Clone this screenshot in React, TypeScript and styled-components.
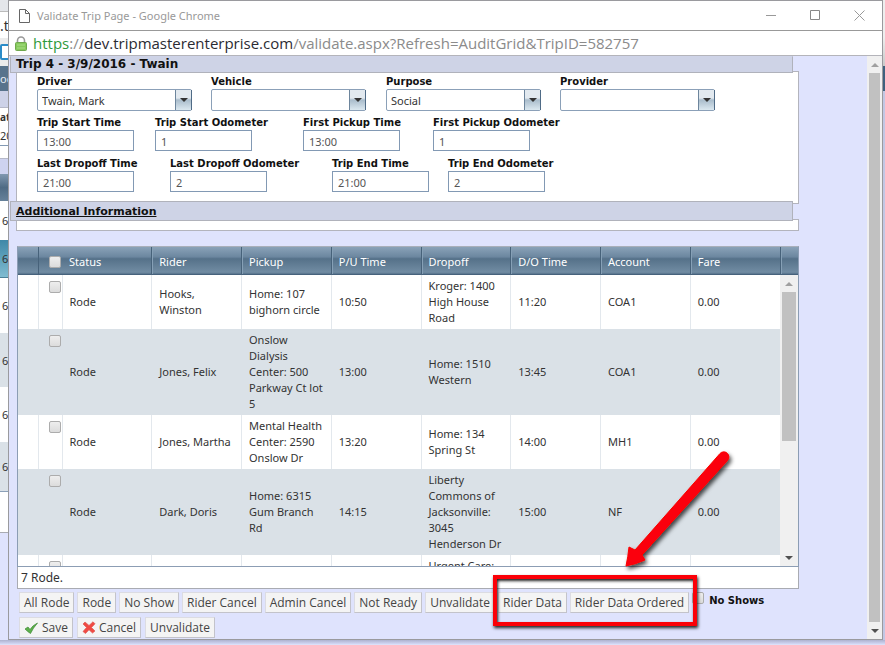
import React from "react";
import styled, { createGlobalStyle, css } from "styled-components";

const uiFont = `"Noto Sans", "Open Sans", sans-serif`;
const narrowFont = `"Open Sans", "Noto Sans", sans-serif`;
const boldFont = `"DejaVu Sans", sans-serif`;

const GlobalStyle = createGlobalStyle`
  *, *::before, *::after { box-sizing: border-box; }
  body { margin: 0; background: #dfe3fd; font-family: ${uiFont}; color: #333; overflow: hidden; }
  button, input, select { font-family: inherit; margin: 0; }
`;

/* ---------- desktop behind the popup ---------- */
const Desktop = styled.div`
  display: flex;
  padding-bottom: 6px;
  background: linear-gradient(to top, #f3f4fe 0, #d3d8f5 2px, #aeb2cf 6px, #dfe3fd 6px);
`;

const LeftStrip = styled.div`
  width: 8px;
  flex: none;
  overflow: hidden;
  display: flex;
  flex-direction: column;
`;

const Slice = styled.div<{ $h: number; $bg?: string; $edge?: string; $bold?: boolean; $size?: number; $inset?: number }>`
  height: ${(p) => p.$h}px;
  width: 8px;
  flex: none;
  display: flex;
  align-items: center;
  padding-left: ${(p) => p.$inset ?? 0}px;
  background: ${(p) => p.$bg ?? "#fff"};
  border-bottom: ${(p) => (p.$edge ? `1px solid ${p.$edge}` : "0")};
  color: #333;
  font: ${(p) => (p.$bold ? "bold" : "normal")} ${(p) => p.$size ?? 11}px ${uiFont};
  white-space: nowrap;
`;

const NavText = styled.span`
  color: #e6ecf2;
`;

const LogoEdge = styled.span`
  width: 10px;
  height: 16px;
  flex: none;
  border: 2px solid #2b8cc8;
  border-radius: 2px;
  background: #fff;
`;

const RightStrip = styled.div`
  width: 2px;
  flex: none;
  background: linear-gradient(#eee 0 37px, #c9c9c9 66px, #3e617e 66px 91px, #c2c7e4 91px);
`;

/* ---------- popup window ---------- */
const Window = styled.div`
  flex: 1;
  min-width: 0;
  border: 1px solid #9a9a9e;
  background: #dfe3fd;
`;

const TitleBar = styled.header`
  height: 30px;
  display: flex;
  align-items: center;
  padding: 0 17px 0 10px;
  background: #fff;
  border-bottom: 1px solid #999;
  color: #999;
  font-size: 11px;
`;

const TitleText = styled.span`
  flex: 1;
  padding-left: 7px;
`;

const WindowButtons = styled.div`
  display: flex;
  gap: 33px;
`;

const IconButton = styled.button`
  border: 0;
  padding: 0;
  background: none;
  display: flex;
`;

const AddressBar = styled.div`
  height: 25px;
  display: flex;
  align-items: center;
  gap: 6px;
  padding-left: 6px;
  background: #fff;
  border-bottom: 1px solid #b4b4ba;
  font: 15px ${narrowFont};
  color: #8b8b8b;
`;

const Url = styled.span`
  white-space: nowrap;
`;
const Scheme = styled.span`
  color: #2f9a3c;
`;
const Host = styled.span`
  color: #2b2b33;
`;

const Page = styled.div`
  display: flex;
`;

const Main = styled.main`
  flex: 1;
  min-width: 0;
  padding: 0 68px 0 1px;
`;

const SectionBar = styled.h2<{ $tall?: boolean }>`
  margin: ${(p) => (p.$tall ? -3 : 0)}px 6px -2px 0;
  height: ${(p) => (p.$tall ? 20 : 17)}px;
  position: relative;
  z-index: 1;
  display: flex;
  align-items: center;
  padding-left: 5px;
  padding-bottom: ${(p) => (p.$tall ? 0 : 2)}px;
  border: 1px solid #b0b2bb;
  border-top-color: ${(p) => (p.$tall ? "#b0b2bb" : "#ced3e8")};
  background: #ced3e6;
  color: #111;
  font: bold ${(p) => (p.$tall ? 11 : 12)}px ${boldFont};
`;

const SectionLink = styled.a`
  color: inherit;
`;

const Panel = styled.div`
  margin-left: 6px;
  background: #fff;
  border: 1px solid #b3b4bd;
  min-height: 12px;
`;

const Form = styled.form`
  padding: 4px 0 4px 20px;
  margin: 0;
`;

const FieldRow = styled.div<{ $cols: string }>`
  display: grid;
  grid-template-columns: ${(p) => p.$cols};
  height: 41px;
`;

const Field = styled.label`
  display: flex;
  flex-direction: column;
  align-items: flex-start;
  gap: 2px;
  font: bold 10px/11px ${boldFont};
  color: #111;
  white-space: nowrap;
`;

const TextInput = styled.input`
  width: 97px;
  height: 21px;
  padding: 2px 5px 0;
  border: 1px solid #8299b4;
  background: #fff;
  color: #555;
  font: 11px ${uiFont};
`;

const SelectBox = styled.span`
  display: grid;
  grid-template-columns: 1fr 16px;
  width: 155px;
  height: 22px;
  border: 1px solid #8ba0b8;
  border-radius: 2px;
  background: #fff;
`;

const Select = styled.select`
  grid-area: 1 / 1 / 2 / 3;
  appearance: none;
  border: 0;
  padding: 1px 20px 0 4px;
  background: transparent;
  color: #333;
  font: 11px ${uiFont};
`;

const SelectArrow = styled.span`
  grid-area: 1 / 2;
  display: flex;
  align-items: center;
  justify-content: center;
  border-left: 1px solid #6d859c;
  background: linear-gradient(#e2e9ef 0 40%, #a9bccb 50%, #dbe8f0);
  box-shadow: 1px 0 0 #4f6b86;
  pointer-events: none;
`;

/* ---------- grid ---------- */
const Grid = styled.section`
  margin: 15px 0 0 7px;
  border: 1px solid #8c9db4;
  border-top-color: #a9afba;
`;

const gridTable = css`
  width: 100%;
  border-collapse: collapse;
  table-layout: fixed;
  font-size: 11px;
`;

const HeadTable = styled.table`
  ${gridTable}
  height: 28px;
  background: linear-gradient(#8aa2b8 0, #6c87a0 35%, #557189 42%, #718ca3 90%, #46627c);
  border-bottom: 1px solid #46627c;
  color: #fff;
`;

const HeadCell = styled.th<{ $plain?: boolean }>`
  padding: 2px 0 0 7px;
  text-align: left;
  font-weight: normal;
  border-left: ${(p) => (p.$plain ? "0" : "1px solid #47627a")};
  box-shadow: ${(p) => (p.$plain ? "none" : "inset 1px 0 0 #86a0b6")};
`;

const CheckCell = styled.th`
  padding: 2px 0 0 10px;
  border-left: 1px solid #47627a;
  line-height: 0;
`;

const Viewport = styled.div`
  display: flex;
  height: 291px;
  background: #fff;
`;

const Rows = styled.div`
  flex: 1;
  min-width: 0;
  overflow: hidden;
`;

const BodyTable = styled.table`
  ${gridTable}
  line-height: 16px;
`;

const Row = styled.tr<{ $alt?: boolean }>`
  background: ${(p) => (p.$alt ? "#dae1e7" : "#fff")};
  & > td {
    border-left: 1px solid ${(p) => (p.$alt ? "#dae1e7" : "#e3e8ed")};
  }
  & > td:first-child {
    border-left: 0;
  }
`;

const Cell = styled.td`
  padding: 3px 0 3px 7px;
  white-space: pre;
  vertical-align: middle;
`;

const TickCell = styled.td`
  padding: 6px 0 0 10px;
  vertical-align: top;
  line-height: 0;
`;

const Checkbox = styled.input`
  appearance: none;
  width: 12px;
  height: 12px;
  border: 1px solid #acacac;
  border-radius: 2px;
  background: linear-gradient(#eee, #dcdcdc);
`;

const StatusLine = styled.div`
  height: 22px;
  margin-left: 7px;
  padding-left: 3px;
  display: flex;
  align-items: center;
  border: 1px solid #a9abb2;
  border-top: 0;
  background: #fff;
  font-size: 12px;
`;

/* ---------- scroll bar ---------- */
const ScrollBar = styled.div<{ $inner?: boolean }>`
  width: ${(p) => (p.$inner ? 18 : 15)}px;
  flex: none;
  display: flex;
  flex-direction: column;
  align-items: stretch;
  background: #f0f0f0;
`;

const ScrollButton = styled.button`
  height: 17px;
  border: 0;
  padding: 0;
  display: flex;
  align-items: center;
  justify-content: center;
  background: none;
`;

const Track = styled.div`
  flex: 1;
  padding: 0 2px;
`;

const Thumb = styled.div<{ $share: number }>`
  height: ${(p) => p.$share}%;
  background: #c1c1c1;
`;

/* ---------- toolbar ---------- */
const Toolbar = styled.div<{ $gap: number }>`
  display: flex;
  gap: ${(p) => p.$gap}px;
  padding: 3px 0 0 9px;
  height: 25px;
`;

const ToolButton = styled.button`
  height: 21px;
  padding: 0 4px;
  display: flex;
  align-items: center;
  gap: 3px;
  border: 1px solid #dcdce2;
  border-right-color: #c3c3ca;
  border-bottom-color: #c3c3ca;
  background: #f4f4f4;
  color: #444;
  font: 12px ${narrowFont};
  white-space: nowrap;
`;

const Highlighted = styled.div`
  position: relative;
  display: flex;
  gap: 3px;
`;

const Frame = styled.div`
  position: absolute;
  z-index: 3;
  left: -5px;
  right: -8px;
  top: -17px;
  height: 51px;
  border: 4px solid #fb0007;
  box-shadow: 1px 2px 3px #222, inset 1px 2px 3px #222;
  pointer-events: none;
`;

const Pointer = styled.svg`
  position: absolute;
  z-index: 4;
  right: -48px;
  bottom: 47px;
  overflow: visible;
  pointer-events: none;
`;

const ShowsLabel = styled.label`
  display: flex;
  align-items: flex-start;
  gap: 5px;
  font: bold 10px/18px ${boldFont};
  color: #111;
`;

/* ---------- data ---------- */
const columns = ["Status", "Rider", "Pickup", "P/U Time", "Dropoff", "D/O Time", "Account", "Fare"];

const trips: string[][] = [
  ["Rode", "Hooks,\nWinston", "Home: 107\nbighorn circle", "10:50", "Kroger: 1400\nHigh House\nRoad", "11:20", "COA1", "0.00"],
  ["Rode", "Jones, Felix", "Onslow\nDialysis\nCenter: 500\nParkway Ct lot\n5", "13:00", "Home: 1510\nWestern", "13:45", "COA1", "0.00"],
  ["Rode", "Jones, Martha", "Mental Health\nCenter: 2590\nOnslow Dr", "13:20", "Home: 134\nSpring St", "14:00", "MH1", "0.00"],
  ["Rode", "Dark, Doris", "Home: 6315\nGum Branch\nRd", "14:15", "Liberty\nCommons of\nJacksonville:\n3045\nHenderson Dr", "15:00", "NF", "0.00"],
  ["", "", "", "", "Urgent Care:", "", "", ""],
];

const Caret = ({ up, color = "#333" }: { up?: boolean; color?: string }) => (
  <svg width="8" height="4" viewBox="0 0 8 4" aria-hidden="true">
    <path d={up ? "M0 4 4 0l4 4z" : "M0 0h8L4 4z"} fill={color} />
  </svg>
);

const Scroller = ({ share, inner }: { share: number; inner?: boolean }) => (
  <ScrollBar $inner={inner}>
    <ScrollButton type="button" aria-label="Scroll up">
      <Caret up color="#a0a0a0" />
    </ScrollButton>
    <Track>
      <Thumb $share={share} />
    </Track>
    <ScrollButton type="button" aria-label="Scroll down">
      <Caret color="#505050" />
    </ScrollButton>
  </ScrollBar>
);

const SelectField = ({ label, value }: { label: string; value: string }) => (
  <Field>
    {label}
    <SelectBox>
      <Select defaultValue={value}>
        <option value={value}>{value}</option>
      </Select>
      <SelectArrow>
        <Caret />
      </SelectArrow>
    </SelectBox>
  </Field>
);

const TextField = ({ label, value }: { label: string; value: string }) => (
  <Field>
    {label}
    <TextInput type="text" defaultValue={value} />
  </Field>
);

const NarrowCol = styled.col`
  width: 20px;
`;
const TickCol = styled.col`
  width: 24px;
`;
const ScrollCol = styled.col`
  width: 18px;
`;

const Columns = ({ withScroll }: { withScroll?: boolean }) => (
  <colgroup>
    <NarrowCol />
    <TickCol />
    {columns.map((c) => (
      <col key={c} />
    ))}
    {withScroll && <ScrollCol />}
  </colgroup>
);

export default function App() {
  return (
    <>
      <GlobalStyle />
      <Desktop>
        <LeftStrip aria-hidden="true">
          <Slice $h={12} $bg="#e4e6ea" $edge="#bbb" />
          <Slice $h={26} $size={14}>.t</Slice>
          <Slice $h={28} $bg="#ececec"><LogoEdge /></Slice>
          <Slice $h={25} $bg="#58738c"><NavText>oc</NavText></Slice>
          <Slice $h={17} $bg="#cdd2e8" $edge="#b5b8c8" />
          <Slice $h={17} $bold $size={10}>at</Slice>
          <Slice $h={21} $edge="#8299b4">20</Slice>
          <Slice $h={13} $edge="#b5b8c8" />
          <Slice $h={15} $bg="#ced3f0" />
          <Slice $h={27} $bg="linear-gradient(#8098b0, #4f6b84 50%, #66819a)" />
          <Slice $h={39} $inset={2}>6</Slice>
          <Slice $h={38} $inset={2} $bg="linear-gradient(#3f88a8, #7fbbd0)" $edge="#4b7f97">6</Slice>
          <Slice $h={55} $inset={2}>6</Slice>
          <Slice $h={54} $inset={2} $bg="#dae1e7">6</Slice>
          <Slice $h={55} $inset={2}>6</Slice>
          <Slice $h={50} $inset={2} $bg="#dae1e7" $edge="#8ba0b8">6</Slice>
          <Slice $h={41} $edge="#a9abb2" />
        </LeftStrip>

        <Window>
          <TitleBar>
            <svg width="11" height="14" viewBox="0 0 11 14" fill="#fff" stroke="#666" aria-hidden="true">
              <path d="M.5 .5h6l4 4v9H.5z" />
              <path d="M6.500 .5v4h4" fill="none" />
            </svg>
            <TitleText>Validate Trip Page - Google Chrome</TitleText>
            <WindowButtons>
              <IconButton aria-label="Minimize">
                <svg width="11" height="11" stroke="#999"><path d="M0 5.500h10" /></svg>
              </IconButton>
              <IconButton aria-label="Maximize">
                <svg width="11" height="11" stroke="#888" fill="none"><path d="M.5 .5h9v9H.5z" /></svg>
              </IconButton>
              <IconButton aria-label="Close">
                <svg width="11" height="11" stroke="#999"><path d="M.5 .5l10 10M10.500 .5l-10 10" /></svg>
              </IconButton>
            </WindowButtons>
          </TitleBar>

          <AddressBar>
            <svg width="12" height="15" viewBox="0 0 12 15" aria-hidden="true">
              <path d="M2.500 7V4.500a3.500 3.500 0 0 1 7 0V7" fill="none" stroke="#999" strokeWidth="1.600" />
              <rect x=".5" y="6.500" width="11" height="8" rx="1" fill="#86c95c" stroke="#6fa84e" />
              <path d="M2 9h8M2 12h8" stroke="#a9dd86" />
            </svg>
            <Url>
              <Scheme>https</Scheme>://<Host>dev.tripmasterenterprise.com</Host>
              /validate.aspx?Refresh=AuditGrid&amp;TripID=582757
            </Url>
          </AddressBar>

          <Page>
            <Main>
              <SectionBar>Trip 4 - 3/9/2016 - Twain</SectionBar>
              <Panel>
                <Form>
                  <FieldRow $cols="174px 175px 174px auto">
                    <SelectField label="Driver" value="Twain, Mark" />
                    <SelectField label="Vehicle" value="" />
                    <SelectField label="Purpose" value="Social" />
                    <SelectField label="Provider" value="" />
                  </FieldRow>
                  <FieldRow $cols="118px 148px 130px auto">
                    <TextField label="Trip Start Time" value="13:00" />
                    <TextField label="Trip Start Odometer" value="1" />
                    <TextField label="First Pickup Time" value="13:00" />
                    <TextField label="First Pickup Odometer" value="1" />
                  </FieldRow>
                  <FieldRow $cols="133px 162px 116px auto">
                    <TextField label="Last Dropoff Time" value="21:00" />
                    <TextField label="Last Dropoff Odometer" value="2" />
                    <TextField label="Trip End Time" value="21:00" />
                    <TextField label="Trip End Odometer" value="2" />
                  </FieldRow>
                </Form>
              </Panel>
              <SectionBar $tall>
                <SectionLink href="#additional">Additional Information</SectionLink>
              </SectionBar>
              <Panel id="additional" />

              <Grid>
                <HeadTable>
                  <Columns withScroll />
                  <thead>
                    <tr>
                      <HeadCell $plain />
                      <CheckCell>
                        <Checkbox type="checkbox" aria-label="Select all" />
                      </CheckCell>
                      {columns.map((c, i) => (
                        <HeadCell key={c} $plain={i === 0}>{c}</HeadCell>
                      ))}
                      <HeadCell />
                    </tr>
                  </thead>
                </HeadTable>
                <Viewport>
                  <Rows>
                    <BodyTable>
                      <Columns />
                      <tbody>
                        {trips.map((trip, i) => (
                          <Row key={i} $alt={i % 2 === 1}>
                            <td />
                            <TickCell>
                              <Checkbox type="checkbox" aria-label={`Select trip ${i + 1}`} />
                            </TickCell>
                            {trip.map((text, j) => (
                              <Cell key={j}>{text}</Cell>
                            ))}
                          </Row>
                        ))}
                      </tbody>
                    </BodyTable>
                  </Rows>
                  <Scroller share={58} inner />
                </Viewport>
              </Grid>
              <StatusLine>7 Rode.</StatusLine>

              <Toolbar $gap={3}>
                {["All Rode", "Rode", "No Show", "Rider Cancel", "Admin Cancel", "Not Ready", "Unvalidate"].map((t) => (
                  <ToolButton key={t} type="button">{t}</ToolButton>
                ))}
                <Highlighted>
                  <ToolButton type="button">Rider Data</ToolButton>
                  <ToolButton type="button">Rider Data Ordered</ToolButton>
                  <Frame />
                  <Pointer width="112" height="122" viewBox="0 0 112 122" aria-hidden="true">
                    <defs>
                      <filter id="shade" x="-20%" y="-20%" width="140%" height="140%">
                        <feDropShadow dx="2" dy="3" stdDeviation="2" floodColor="#000" floodOpacity=".7" />
                      </filter>
                    </defs>
                    <path
                      d="M95 8.500a5 5 0 0 1 7.500 7L17 110l3 5Q11 119 1 121 3 112 4 102l6 3z"
                      fill="#fb0007"
                      stroke="#fb0007"
                      filter="url(#shade)"
                    />
                  </Pointer>
                </Highlighted>
                <ShowsLabel>
                  <Checkbox type="checkbox" />
                  No Shows
                </ShowsLabel>
              </Toolbar>
              <Toolbar $gap={4}>
                <ToolButton type="button">
                  <svg width="15" height="12" viewBox="0 0 15 12" aria-hidden="true">
                    <path d="M1 7l3-2 2 2.500Q9 3 13.500 1 9 6 6.500 11.500 4 10 1 7z" fill="#5db04c" stroke="#3e8a33" strokeWidth=".7" />
                  </svg>
                  Save
                </ToolButton>
                <ToolButton type="button">
                  <svg width="14" height="13" viewBox="0 0 14 13" aria-hidden="true">
                    <path d="M1 3l2-2 4 3.500L11 .8l2 2L9.500 6.500 13 10l-2.500 2L7 8.800 3.500 12.500 1 10.500 4.500 6.500z" fill="#f04a43" stroke="#dd5b55" strokeWidth=".7" />
                  </svg>
                  Cancel
                </ToolButton>
                <ToolButton type="button">Unvalidate</ToolButton>
              </Toolbar>
            </Main>
            <Scroller share={100} />
          </Page>
        </Window>
        <RightStrip />
      </Desktop>
    </>
  );
}
